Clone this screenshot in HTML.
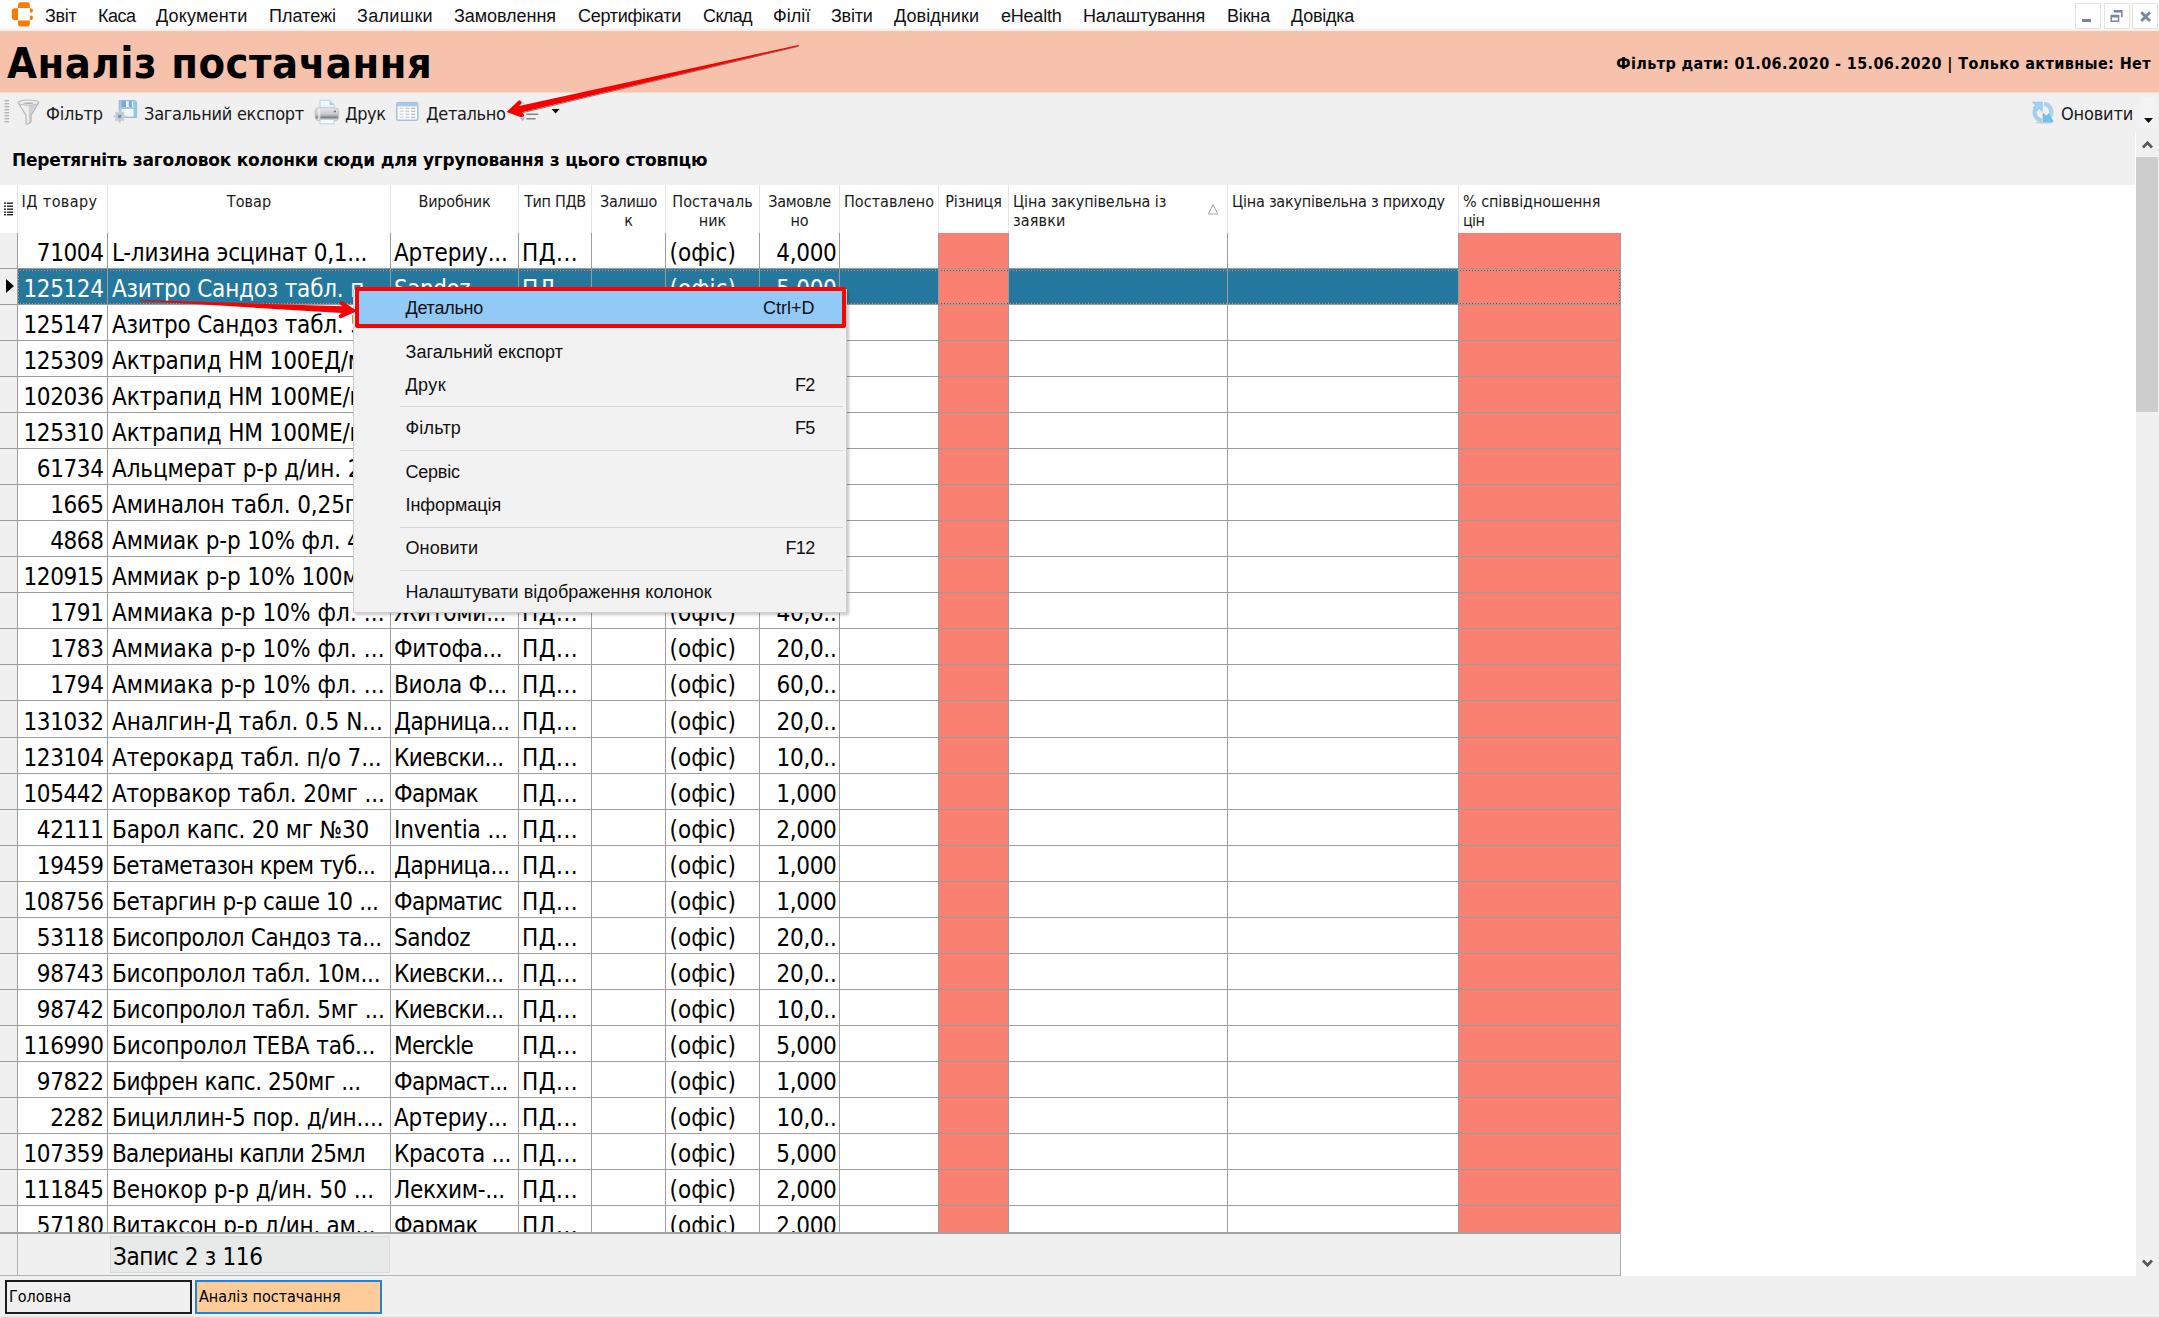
<!DOCTYPE html><html lang="uk"><head><meta charset="utf-8"><title>Аналіз постачання</title><style>
html,body{margin:0;padding:0}
body{width:2159px;height:1318px;overflow:hidden;position:relative;background:#f0f0f0;font-family:"DejaVu Sans Condensed","Liberation Sans",sans-serif;color:#000}
div,span{position:absolute;box-sizing:border-box;white-space:nowrap}
svg{position:absolute;overflow:visible}
#menubar{left:0;top:0;width:2159px;height:31px;background:linear-gradient(#fff 0,#fff 27px,#f0f0f0 30px)}
#menubar span{font-family:"Liberation Sans",sans-serif;font-size:18px;top:5px;line-height:22px;color:#111}
#title{left:0;top:31px;width:2159px;height:61px;background:#f6c2ab}
#title .t{left:7px;top:5px;font-size:43px;font-weight:bold;line-height:54px;letter-spacing:.55px}
#title .f{right:8px;top:22.5px;font-size:16px;font-weight:bold;line-height:20px;letter-spacing:.4px}
#toolbar{left:0;top:92px;width:2159px;height:40px;background:linear-gradient(#f3dad0 0,#f3dad0 1px,#f0f1f2 1px,#f0f0f0 2px)}
#toolbar span{font-size:18px;line-height:22px;top:10.5px;color:#1a1a1a}
#group{left:0;top:132px;width:2135px;height:53px;background:#f0f0f0}
#group span{left:12px;top:18px;font-family:"DejaVu Sans","Liberation Sans",sans-serif;font-size:17px;font-weight:bold;line-height:21px;letter-spacing:-.2px}
#hdr{left:0;top:185px;width:2135px;height:48px;background:#fff}
#hdr .h{font-size:16px;line-height:19.5px;top:6.5px;white-space:nowrap;text-align:center;color:#1a1a1a}
#hdr .vl{top:0;width:1px;height:48px;background:#e4e4e4}
#grid{left:0;top:233px;width:2135px;height:999px;background:#fff;overflow:hidden}
#grid .ind{left:0;top:0;width:17px;height:999px;background:#f0f0f0}
#grid .vl{top:0;width:1px;height:999px;background:#9c9c9c}
#grid .hl{left:0;width:1621px;height:1px;background:#9c9c9c}
#grid .sal{top:0;height:999px;background:#fa8072}
#grid .c{font-size:24px;line-height:41px;height:35px;overflow:hidden}
#grid .sel{left:18px;top:36px;width:1603px;height:35px;background:#25789d}
#foot{left:0;top:1232px;width:1621px;height:44px;background:#f0f0f0;border-top:2px solid #a0a0a0;border-right:1px solid #a9a9a9;border-bottom:1px solid #b4b4b4}
#foot .v{left:17px;top:0;width:1px;height:42px;background:#b0b0b0}
#foot .cell{left:110px;top:2px;width:280px;height:37px;background:#e8eaea;border:1px solid #dadcdc;font-size:24px;line-height:41px;padding-left:2px;letter-spacing:-.35px;overflow:hidden}
#right{left:1621px;top:185px;width:514px;height:1091px;background:#fff}
#sb{left:2135px;top:132px;width:24px;height:1144px;background:#f0f0f0;border-left:1px solid #fff}
#sb .th{left:0;top:25px;width:22px;height:255px;background:#cdcdcd}
#tabs{left:0;top:1276px;width:2159px;height:42px;background:#f0f0f0}
#tabs div{top:4px;height:34px;font-size:16px;line-height:30px;padding-left:2px}
#ctx{left:353px;top:289px;width:494px;height:324px;background:#f2f2f2;border:1px solid #cdcdcd;box-shadow:2px 2px 3px rgba(0,0,0,.22);font-family:"Liberation Sans",sans-serif;font-size:18px}
#ctx span{line-height:22px;color:#111}
#ctx .sep{left:46px;width:443px;height:1px;background:#d7d7d7}
#ctx .hi{left:2px;top:1px;width:489px;height:35px;background:#91c9f7}
#red{left:355px;top:287px;width:491px;height:41px;border:4px solid #f00;border-radius:2px}
</style></head><body>
<div id="menubar">
<svg style="left:11px;top:2px" width="23" height="26" viewBox="11 2 23 26"><g fill="#ff7800"><path d="M18 7.900V4.600a2.300 2.300 0 0 1 2.300-2.300h7.200a2.300 2.300 0 0 1 2.300 2.300v3.300z"/><path d="M18 20.600v3.600a2.300 2.300 0 0 0 2.300 2.300h7.200a2.300 2.300 0 0 0 2.300-2.300v-3.600z"/><path d="M18 8.300h-3.200a3 3 0 0 0-3 3v5.700a3 3 0 0 0 3 3h3.200z"/><path d="M29.800 8.300h.9a2.300 2.300 0 0 1 2.300 2.300v0a2.200 2.200 0 0 1-2.200 2.200h-1z"/><path d="M29.800 20h.9a2.300 2.300 0 0 0 2.300-2.300v0a2.200 2.200 0 0 0-2.200-2.200h-1z"/></g></svg>
<span style="left:45px;letter-spacing:-0.3px">Звіт</span>
<span style="left:98px;letter-spacing:-0.5px">Каса</span>
<span style="left:156px;letter-spacing:0.18px">Документи</span>
<span style="left:269px;letter-spacing:0.01px">Платежі</span>
<span style="left:357px;letter-spacing:0.31px">Залишки</span>
<span style="left:454px;letter-spacing:-0.06px">Замовлення</span>
<span style="left:578px;letter-spacing:-0.27px">Сертифікати</span>
<span style="left:703px;letter-spacing:-0.62px">Склад</span>
<span style="left:773px;letter-spacing:0.06px">Філії</span>
<span style="left:831px;letter-spacing:-0.25px">Звіти</span>
<span style="left:894px;letter-spacing:0.07px">Довідники</span>
<span style="left:1001px;letter-spacing:-0.22px">eHealth</span>
<span style="left:1083px;letter-spacing:-0.2px">Налаштування</span>
<span style="left:1227px;letter-spacing:-0.17px">Вікна</span>
<span style="left:1291px;letter-spacing:-0.25px">Довідка</span>
<div style="left:2075px;top:3px;width:26px;height:26px;border:1px solid #e3e3e3;background:#fff"></div>
<div style="left:2104px;top:3px;width:26px;height:26px;border:1px solid #e3e3e3;background:#fff"></div>
<div style="left:2132px;top:3px;width:26px;height:26px;border:1px solid #e3e3e3;background:#fff"></div>
<svg style="left:2069px;top:0" width="90" height="31" viewBox="2069 0 90 31"><g fill="#76879a"><rect x="2082" y="19" width="9" height="3"/><path d="M2113.8 10h8.8v7.3h-1.6v-4.8h-7.2z"/><path d="M2110.5 14.8h8.8v7.1h-8.8zM2112 17.5v3h5.8v-3z" fill-rule="evenodd"/></g><path d="M2141.2 12.2l8.8 8.8M2150 12.2l-8.8 8.8" stroke="#76879a" stroke-width="2.8" fill="none"/></svg>
</div>
<div id="title"><span class="t">Аналіз постачання</span><span class="f">Фільтр дати: 01.06.2020 - 15.06.2020 | Только активные: Нет</span></div>
<div id="toolbar">
<svg style="left:0;top:0" width="600" height="40" viewBox="0 92 600 40">
<defs><linearGradient id="fg" x1="0" x2="1"><stop offset="0" stop-color="#f6f6f6"/><stop offset=".5" stop-color="#ececec"/><stop offset=".55" stop-color="#cfcfcf"/><stop offset="1" stop-color="#dedede"/></linearGradient><linearGradient id="pg" x1="0" y1="0" x2="0" y2="1"><stop offset="0" stop-color="#e9e9e9"/><stop offset=".5" stop-color="#c9c9c9"/><stop offset=".78" stop-color="#7e7e7e"/><stop offset=".9" stop-color="#d8d8d8"/><stop offset="1" stop-color="#c4c4c4"/></linearGradient><linearGradient id="pp" x1="0" y1="0" x2="0" y2="1"><stop offset="0" stop-color="#fff"/><stop offset="1" stop-color="#dcecfd"/></linearGradient></defs>
<g fill="#b3b3b3"><rect x="4.5" y="100" width="4.5" height="1.4"/><rect x="4.5" y="103" width="4.5" height="1.4"/><rect x="4.5" y="106" width="4.5" height="1.4"/><rect x="4.5" y="109" width="4.5" height="1.4"/><rect x="4.5" y="112" width="4.5" height="1.4"/><rect x="4.5" y="115" width="4.5" height="1.4"/><rect x="4.5" y="118" width="4.5" height="1.4"/><rect x="4.5" y="121" width="4.5" height="1.4"/></g>
<path d="M18.3 103L26 115.2v8.1c0 .9 1 1.2 1.8.8l2.6-1.5c.5-.3.7-.7.7-1.3v-6.100L38.6 103z" fill="url(#fg)" stroke="#b4b4b4" stroke-width="1.1"/><ellipse cx="28.4" cy="102.6" rx="10.3" ry="2.6" fill="#ececec" stroke="#bdbdbd" stroke-width="1.1"/><ellipse cx="28.4" cy="103.3" rx="5.2" ry=".8" fill="#b0b0b0"/>
<path d="M119.2 100.5h15.6l1.8 1.6v15.4h-17.4z" fill="#a9c6e6" stroke="#94b6de" stroke-width="1"/><path d="M134.8 100.5l1.8 1.6v15.4h-2.4z" fill="#8ccbe6"/><rect x="121.6" y="101.2" width="11.6" height="5.8" fill="#74a9d9"/><rect x="126" y="101.2" width="2.8" height="5.8" fill="#f2f6fa"/><rect x="131.8" y="101.2" width="1.4" height="5.8" fill="#e6eef7"/><rect x="121.6" y="109" width="11.8" height="7.6" fill="#f4f4f4"/>
<circle cx="119.7" cy="116.4" r="4.6" fill="#c6ccd1"/><path d="M119.7 110.4v12M113.7 116.4h12M115.5 112.2l8.4 8.4M123.9 112.2l-8.4 8.4" stroke="#c6ccd1" stroke-width="2.2"/><circle cx="119.7" cy="116.4" r="1.8" fill="#5f9bcd"/>
<path d="M320 100.3h9.8l4.4 4.6v4.5H320z" fill="url(#pp)" stroke="#b2d0f3" stroke-width="1"/><path d="M329.6 100.5v4.6h4.4z" fill="#a9c9ef"/><rect x="315.2" y="107.8" width="23.4" height="12.8" rx="3.4" fill="url(#pg)" stroke="#c2c2c2" stroke-width="1"/><rect x="317.8" y="108.6" width="2.6" height="10.6" fill="#f1f1f1" opacity=".7"/><rect x="333.8" y="110.6" width="2.2" height="1.6" fill="#7a7a7a"/><rect x="320" y="119.6" width="14.2" height="4.2" fill="#fbfdff" stroke="#b2d0f3" stroke-width="1"/>
<rect x="396.8" y="102.7" width="21" height="17.6" rx="1.2" fill="#fdfdfe" stroke="#a3bfe6" stroke-width="1.5"/><rect x="397" y="103" width="20.6" height="3.4" fill="#adc8eb"/>
<g><rect x="399.6" y="107.6" width="4" height="1.5" fill="#d6d6d6"/><rect x="405.4" y="107.6" width="4" height="1.5" fill="#cdcdcd"/><rect x="411.2" y="107.6" width="4" height="1.5" fill="#bdbdbd"/><rect x="399.6" y="110.6" width="4" height="1.5" fill="#d6d6d6"/><rect x="405.4" y="110.6" width="4" height="1.5" fill="#cdcdcd"/><rect x="411.2" y="110.6" width="4" height="1.5" fill="#bdbdbd"/><rect x="399.6" y="113.6" width="4" height="1.5" fill="#d6d6d6"/><rect x="405.4" y="113.6" width="4" height="1.5" fill="#cdcdcd"/><rect x="411.2" y="113.6" width="4" height="1.5" fill="#bdbdbd"/><rect x="399.6" y="116.6" width="4" height="1.5" fill="#d6d6d6"/><rect x="405.4" y="116.6" width="4" height="1.5" fill="#cdcdcd"/><rect x="411.2" y="116.6" width="4" height="1.5" fill="#bdbdbd"/></g>
<path d="M522.6 100.5l2.6 3.6h-5.2z" fill="#c3d9f6"/><path d="M522.6 121.2l2.6-3.6h-5.2z" fill="#8eb4ef"/><path d="M526.4 114.3h11.8M526.4 118.7h9.2" stroke="#858585" stroke-width="1.5"/><path d="M551.6 109h8l-4 4.5z" fill="#111"/>
</svg>
<span style="left:46px;letter-spacing:-0.18px">Фільтр</span>
<span style="left:144px;letter-spacing:-0.25px">Загальний експорт</span>
<span style="left:345px;letter-spacing:-0.45px">Друк</span>
<span style="left:426px;letter-spacing:-0.36px">Детально</span>
<svg style="left:2030px;top:8px" width="26" height="26" viewBox="2030 100 26 26"><ellipse cx="2044" cy="122.6" rx="8.5" ry="1.2" fill="#000" opacity=".12"/><g fill="none" stroke-width="4.2"><path d="M2036.2 107.5a8.2 8.2 0 0 0 5.8 13" stroke="#a4cff3"/><path d="M2050 116.5a8.2 8.2 0 0 0-6-12.6" stroke="#a9d2f4"/></g><path d="M2032.6 102.2h9.6v9.2l-3-3-2.6 2.6-3.4-3.2 2.6-2.6z" fill="#9fd2f8" stroke="#86bdf0" stroke-width=".8"/><path d="M2043.2 113.4l3.2 2.6 2.4-2.2 4.4 8h-10z" fill="#68c4f6" stroke="#6aaee8" stroke-width=".8"/></svg>
<span style="left:2061px;letter-spacing:-0.18px">Оновити</span>
<div style="left:2140px;top:5px;width:16px;height:31px;background:#f3f3f3"></div>
<svg style="left:2144px;top:26px" width="9" height="5" viewBox="0 0 9 5"><path d="M0 0h9l-4.5 5z" fill="#111"/></svg>
</div>
<div id="group"><span>Перетягніть заголовок колонки сюди для угруповання з цього стовпцю</span></div>
<div id="hdr">
<div class="vl" style="left:17px"></div>
<div class="vl" style="left:107px"></div>
<div class="vl" style="left:390px"></div>
<div class="vl" style="left:518px"></div>
<div class="vl" style="left:591px"></div>
<div class="vl" style="left:665px"></div>
<div class="vl" style="left:759px"></div>
<div class="vl" style="left:839px"></div>
<div class="vl" style="left:938px"></div>
<div class="vl" style="left:1008px"></div>
<div class="vl" style="left:1227px"></div>
<div class="vl" style="left:1458px"></div>
<svg style="left:4px;top:17px" width="9" height="13" viewBox="0 0 9 13"><g fill="#222"><rect x="0" y="0.5" width="2" height="1.4"/><rect x="3" y="0.5" width="6" height="1.4"/><rect x="0" y="3.5" width="2" height="1.4"/><rect x="3" y="3.5" width="6" height="1.4"/><rect x="0" y="6.5" width="2" height="1.4"/><rect x="3" y="6.5" width="6" height="1.4"/><rect x="0" y="9.5" width="2" height="1.4"/><rect x="3" y="9.5" width="6" height="1.4"/><rect x="0" y="12" width="2" height="1.4"/><rect x="3" y="12" width="6" height="1.4"/></g></svg>
<div class="h" style="left:15px;width:89px"><span style="position:static;letter-spacing:0.42px">ІД товару</span></div>
<div class="h" style="left:108px;width:282px"><span style="position:static;letter-spacing:0.09px">Товар</span></div>
<div class="h" style="left:391px;width:127px"><span style="position:static;letter-spacing:-0.19px">Виробник</span></div>
<div class="h" style="left:519px;width:72px"><span style="position:static;letter-spacing:-0.34px">Тип ПДВ</span></div>
<div class="h" style="left:592px;width:73px"><span style="position:static;letter-spacing:-0.26px">Залишо</span><br>к</div>
<div class="h" style="left:666px;width:93px"><span style="position:static;letter-spacing:0.08px">Постачаль</span><br>ник</div>
<div class="h" style="left:760px;width:79px"><span style="position:static;letter-spacing:-0.25px">Замовле</span><br>но</div>
<div class="h" style="left:840px;width:98px"><span style="position:static;letter-spacing:0.05px">Поставлено</span></div>
<div class="h" style="left:939px;width:69px"><span style="position:static;letter-spacing:-0.17px">Різниця</span></div>
<div class="h" style="left:1013px;width:185px;text-align:left"><span style="position:static;letter-spacing:-0.06px">Ціна закупівельна із</span><br><span style="position:static;letter-spacing:0.14px">заявки</span></div>
<div class="h" style="left:1232px;width:222px;text-align:left"><span style="position:static;letter-spacing:-0.22px">Ціна закупівельна з приходу</span></div>
<div class="h" style="left:1463px;width:153px;text-align:left"><span style="position:static;letter-spacing:-0.06px">% співвідношення</span><br><span style="position:static;letter-spacing:-0.7px">цін</span></div>
<svg style="left:1207px;top:17.5px" width="12" height="12" viewBox="0 0 12 12"><path d="M6 1.5l4.8 9.5H1.2z" fill="#fff" stroke="#a6a6a6" stroke-width="1"/></svg>
</div>
<div id="grid"><div class="ind"></div>
<div class="sel"></div>
<div class="sal" style="left:939px;width:69px"></div><div class="sal" style="left:1459px;width:161px"></div>
<div class="vl" style="left:17px"></div>
<div class="vl" style="left:107px"></div>
<div class="vl" style="left:390px"></div>
<div class="vl" style="left:518px"></div>
<div class="vl" style="left:591px"></div>
<div class="vl" style="left:665px"></div>
<div class="vl" style="left:759px"></div>
<div class="vl" style="left:839px"></div>
<div class="vl" style="left:938px"></div>
<div class="vl" style="left:1008px"></div>
<div class="vl" style="left:1227px"></div>
<div class="vl" style="left:1458px"></div>
<div class="vl" style="left:1620px"></div>
<div class="hl" style="top:35.0px"></div>
<div class="hl" style="top:71.04px"></div>
<div class="hl" style="top:107.08px"></div>
<div class="hl" style="top:143.12px"></div>
<div class="hl" style="top:179.16px"></div>
<div class="hl" style="top:215.2px"></div>
<div class="hl" style="top:251.24px"></div>
<div class="hl" style="top:287.28px"></div>
<div class="hl" style="top:323.32px"></div>
<div class="hl" style="top:359.36px"></div>
<div class="hl" style="top:395.4px"></div>
<div class="hl" style="top:431.44px"></div>
<div class="hl" style="top:467.48px"></div>
<div class="hl" style="top:503.52px"></div>
<div class="hl" style="top:539.56px"></div>
<div class="hl" style="top:575.6px"></div>
<div class="hl" style="top:611.64px"></div>
<div class="hl" style="top:647.68px"></div>
<div class="hl" style="top:683.72px"></div>
<div class="hl" style="top:719.76px"></div>
<div class="hl" style="top:755.8px"></div>
<div class="hl" style="top:791.84px"></div>
<div class="hl" style="top:827.88px"></div>
<div class="hl" style="top:863.92px"></div>
<div class="hl" style="top:899.96px"></div>
<div class="hl" style="top:936.0px"></div>
<div class="hl" style="top:972.04px"></div>
<div class="hl" style="top:1008.08px"></div>
<div class="c" style="left:18px;top:0.0px;width:89px;text-align:right;padding-right:3.5px;letter-spacing:-.4px">71004</div>
<div class="c" style="left:108px;top:0.0px;width:282px;padding-left:4px;letter-spacing:-0.26px">L-лизина эсцинат 0,1...</div>
<div class="c" style="left:391px;top:0.0px;width:127px;padding-left:3px;letter-spacing:-0.17px">Артериу...</div>
<div class="c" style="left:519px;top:0.0px;width:72px;padding-left:3px;letter-spacing:.5px">ПД...</div>
<div class="c" style="left:666px;top:0.0px;width:93px;padding-left:3.5px">(офіс)</div>
<div class="c" style="left:760px;top:0.0px;width:79px;text-align:right;padding-right:2.5px;letter-spacing:-.3px">4,000</div>
<div class="c" style="left:18px;top:36.04px;width:89px;text-align:right;padding-right:3.5px;letter-spacing:-.4px;color:#fff">125124</div>
<div class="c" style="left:108px;top:36.04px;width:282px;padding-left:4px;letter-spacing:-0.2px;color:#fff">Азитро Сандоз табл. п...</div>
<div class="c" style="left:391px;top:36.04px;width:127px;padding-left:3px;letter-spacing:-0.45px;color:#fff">Sandoz</div>
<div class="c" style="left:519px;top:36.04px;width:72px;padding-left:3px;letter-spacing:.5px;color:#fff">ПД...</div>
<div class="c" style="left:666px;top:36.04px;width:93px;padding-left:3.5px;color:#fff">(офіс)</div>
<div class="c" style="left:760px;top:36.04px;width:79px;text-align:right;padding-right:2.5px;letter-spacing:-.3px;color:#fff">5,000</div>
<div class="c" style="left:18px;top:72.08px;width:89px;text-align:right;padding-right:3.5px;letter-spacing:-.4px">125147</div>
<div class="c" style="left:108px;top:72.08px;width:282px;padding-left:4px;letter-spacing:-0.2px">Азитро Сандоз табл. 5...</div>
<div class="c" style="left:391px;top:72.08px;width:127px;padding-left:3px;letter-spacing:-0.2px"></div>
<div class="c" style="left:519px;top:72.08px;width:72px;padding-left:3px;letter-spacing:.5px"></div>
<div class="c" style="left:666px;top:72.08px;width:93px;padding-left:3.5px"></div>
<div class="c" style="left:760px;top:72.08px;width:79px;text-align:right;padding-right:2.5px;letter-spacing:-.3px"></div>
<div class="c" style="left:18px;top:108.12px;width:89px;text-align:right;padding-right:3.5px;letter-spacing:-.4px">125309</div>
<div class="c" style="left:108px;top:108.12px;width:282px;padding-left:4px;letter-spacing:-0.12px">Актрапид НМ 100ЕД/м...</div>
<div class="c" style="left:391px;top:108.12px;width:127px;padding-left:3px;letter-spacing:-0.2px"></div>
<div class="c" style="left:519px;top:108.12px;width:72px;padding-left:3px;letter-spacing:.5px"></div>
<div class="c" style="left:666px;top:108.12px;width:93px;padding-left:3.5px"></div>
<div class="c" style="left:760px;top:108.12px;width:79px;text-align:right;padding-right:2.5px;letter-spacing:-.3px"></div>
<div class="c" style="left:18px;top:144.16px;width:89px;text-align:right;padding-right:3.5px;letter-spacing:-.4px">102036</div>
<div class="c" style="left:108px;top:144.16px;width:282px;padding-left:4px;letter-spacing:-0.12px">Актрапид НМ 100МЕ/м...</div>
<div class="c" style="left:391px;top:144.16px;width:127px;padding-left:3px;letter-spacing:-0.2px"></div>
<div class="c" style="left:519px;top:144.16px;width:72px;padding-left:3px;letter-spacing:.5px"></div>
<div class="c" style="left:666px;top:144.16px;width:93px;padding-left:3.5px"></div>
<div class="c" style="left:760px;top:144.16px;width:79px;text-align:right;padding-right:2.5px;letter-spacing:-.3px"></div>
<div class="c" style="left:18px;top:180.2px;width:89px;text-align:right;padding-right:3.5px;letter-spacing:-.4px">125310</div>
<div class="c" style="left:108px;top:180.2px;width:282px;padding-left:4px;letter-spacing:-0.12px">Актрапид НМ 100МЕ/м...</div>
<div class="c" style="left:391px;top:180.2px;width:127px;padding-left:3px;letter-spacing:-0.2px"></div>
<div class="c" style="left:519px;top:180.2px;width:72px;padding-left:3px;letter-spacing:.5px"></div>
<div class="c" style="left:666px;top:180.2px;width:93px;padding-left:3.5px"></div>
<div class="c" style="left:760px;top:180.2px;width:79px;text-align:right;padding-right:2.5px;letter-spacing:-.3px"></div>
<div class="c" style="left:18px;top:216.24px;width:89px;text-align:right;padding-right:3.5px;letter-spacing:-.4px">61734</div>
<div class="c" style="left:108px;top:216.24px;width:282px;padding-left:4px;letter-spacing:-0.12px">Альцмерат р-р д/ин. 2...</div>
<div class="c" style="left:391px;top:216.24px;width:127px;padding-left:3px;letter-spacing:-0.2px"></div>
<div class="c" style="left:519px;top:216.24px;width:72px;padding-left:3px;letter-spacing:.5px"></div>
<div class="c" style="left:666px;top:216.24px;width:93px;padding-left:3.5px"></div>
<div class="c" style="left:760px;top:216.24px;width:79px;text-align:right;padding-right:2.5px;letter-spacing:-.3px"></div>
<div class="c" style="left:18px;top:252.28px;width:89px;text-align:right;padding-right:3.5px;letter-spacing:-.4px">1665</div>
<div class="c" style="left:108px;top:252.28px;width:282px;padding-left:4px;letter-spacing:-0.12px">Аминалон табл. 0,25г...</div>
<div class="c" style="left:391px;top:252.28px;width:127px;padding-left:3px;letter-spacing:-0.2px"></div>
<div class="c" style="left:519px;top:252.28px;width:72px;padding-left:3px;letter-spacing:.5px"></div>
<div class="c" style="left:666px;top:252.28px;width:93px;padding-left:3.5px"></div>
<div class="c" style="left:760px;top:252.28px;width:79px;text-align:right;padding-right:2.5px;letter-spacing:-.3px"></div>
<div class="c" style="left:18px;top:288.32px;width:89px;text-align:right;padding-right:3.5px;letter-spacing:-.4px">4868</div>
<div class="c" style="left:108px;top:288.32px;width:282px;padding-left:4px;letter-spacing:-0.12px">Аммиак р-р 10% фл. 4...</div>
<div class="c" style="left:391px;top:288.32px;width:127px;padding-left:3px;letter-spacing:-0.2px"></div>
<div class="c" style="left:519px;top:288.32px;width:72px;padding-left:3px;letter-spacing:.5px"></div>
<div class="c" style="left:666px;top:288.32px;width:93px;padding-left:3.5px"></div>
<div class="c" style="left:760px;top:288.32px;width:79px;text-align:right;padding-right:2.5px;letter-spacing:-.3px"></div>
<div class="c" style="left:18px;top:324.36px;width:89px;text-align:right;padding-right:3.5px;letter-spacing:-.4px">120915</div>
<div class="c" style="left:108px;top:324.36px;width:282px;padding-left:4px;letter-spacing:-0.12px">Аммиак р-р 10% 100м...</div>
<div class="c" style="left:391px;top:324.36px;width:127px;padding-left:3px;letter-spacing:-0.2px"></div>
<div class="c" style="left:519px;top:324.36px;width:72px;padding-left:3px;letter-spacing:.5px"></div>
<div class="c" style="left:666px;top:324.36px;width:93px;padding-left:3.5px"></div>
<div class="c" style="left:760px;top:324.36px;width:79px;text-align:right;padding-right:2.5px;letter-spacing:-.3px"></div>
<div class="c" style="left:18px;top:360.4px;width:89px;text-align:right;padding-right:3.5px;letter-spacing:-.4px">1791</div>
<div class="c" style="left:108px;top:360.4px;width:282px;padding-left:4px;letter-spacing:0.06px">Аммиака р-р 10% фл. ...</div>
<div class="c" style="left:391px;top:360.4px;width:127px;padding-left:3px;letter-spacing:-0.2px">Житоми...</div>
<div class="c" style="left:519px;top:360.4px;width:72px;padding-left:3px;letter-spacing:.5px">ПД...</div>
<div class="c" style="left:666px;top:360.4px;width:93px;padding-left:3.5px">(офіс)</div>
<div class="c" style="left:760px;top:360.4px;width:79px;text-align:right;padding-right:2.5px;letter-spacing:-.3px">40,0..</div>
<div class="c" style="left:18px;top:396.44px;width:89px;text-align:right;padding-right:3.5px;letter-spacing:-.4px">1783</div>
<div class="c" style="left:108px;top:396.44px;width:282px;padding-left:4px;letter-spacing:0.06px">Аммиака р-р 10% фл. ...</div>
<div class="c" style="left:391px;top:396.44px;width:127px;padding-left:3px;letter-spacing:-0.25px">Фитофа...</div>
<div class="c" style="left:519px;top:396.44px;width:72px;padding-left:3px;letter-spacing:.5px">ПД...</div>
<div class="c" style="left:666px;top:396.44px;width:93px;padding-left:3.5px">(офіс)</div>
<div class="c" style="left:760px;top:396.44px;width:79px;text-align:right;padding-right:2.5px;letter-spacing:-.3px">20,0..</div>
<div class="c" style="left:18px;top:432.48px;width:89px;text-align:right;padding-right:3.5px;letter-spacing:-.4px">1794</div>
<div class="c" style="left:108px;top:432.48px;width:282px;padding-left:4px;letter-spacing:0.06px">Аммиака р-р 10% фл. ...</div>
<div class="c" style="left:391px;top:432.48px;width:127px;padding-left:3px;letter-spacing:-0.22px">Виола Ф...</div>
<div class="c" style="left:519px;top:432.48px;width:72px;padding-left:3px;letter-spacing:.5px">ПД...</div>
<div class="c" style="left:666px;top:432.48px;width:93px;padding-left:3.5px">(офіс)</div>
<div class="c" style="left:760px;top:432.48px;width:79px;text-align:right;padding-right:2.5px;letter-spacing:-.3px">60,0..</div>
<div class="c" style="left:18px;top:468.52px;width:89px;text-align:right;padding-right:3.5px;letter-spacing:-.4px">131032</div>
<div class="c" style="left:108px;top:468.52px;width:282px;padding-left:4px;letter-spacing:-0.03px">Аналгин-Д табл. 0.5 N...</div>
<div class="c" style="left:391px;top:468.52px;width:127px;padding-left:3px;letter-spacing:-0.47px">Дарница...</div>
<div class="c" style="left:519px;top:468.52px;width:72px;padding-left:3px;letter-spacing:.5px">ПД...</div>
<div class="c" style="left:666px;top:468.52px;width:93px;padding-left:3.5px">(офіс)</div>
<div class="c" style="left:760px;top:468.52px;width:79px;text-align:right;padding-right:2.5px;letter-spacing:-.3px">20,0..</div>
<div class="c" style="left:18px;top:504.56px;width:89px;text-align:right;padding-right:3.5px;letter-spacing:-.4px">123104</div>
<div class="c" style="left:108px;top:504.56px;width:282px;padding-left:4px;letter-spacing:-0.09px">Атерокард табл. п/о 7...</div>
<div class="c" style="left:391px;top:504.56px;width:127px;padding-left:3px;letter-spacing:-0.53px">Киевски...</div>
<div class="c" style="left:519px;top:504.56px;width:72px;padding-left:3px;letter-spacing:.5px">ПД...</div>
<div class="c" style="left:666px;top:504.56px;width:93px;padding-left:3.5px">(офіс)</div>
<div class="c" style="left:760px;top:504.56px;width:79px;text-align:right;padding-right:2.5px;letter-spacing:-.3px">10,0..</div>
<div class="c" style="left:18px;top:540.6px;width:89px;text-align:right;padding-right:3.5px;letter-spacing:-.4px">105442</div>
<div class="c" style="left:108px;top:540.6px;width:282px;padding-left:4px;letter-spacing:-0.15px">Аторвакор табл. 20мг ...</div>
<div class="c" style="left:391px;top:540.6px;width:127px;padding-left:3px;letter-spacing:-0.7px">Фармак</div>
<div class="c" style="left:519px;top:540.6px;width:72px;padding-left:3px;letter-spacing:.5px">ПД...</div>
<div class="c" style="left:666px;top:540.6px;width:93px;padding-left:3.5px">(офіс)</div>
<div class="c" style="left:760px;top:540.6px;width:79px;text-align:right;padding-right:2.5px;letter-spacing:-.3px">1,000</div>
<div class="c" style="left:18px;top:576.64px;width:89px;text-align:right;padding-right:3.5px;letter-spacing:-.4px">42111</div>
<div class="c" style="left:108px;top:576.64px;width:282px;padding-left:4px;letter-spacing:-0.15px">Барол капс. 20 мг №30</div>
<div class="c" style="left:391px;top:576.64px;width:127px;padding-left:3px;letter-spacing:-0.1px">Inventia ...</div>
<div class="c" style="left:519px;top:576.64px;width:72px;padding-left:3px;letter-spacing:.5px">ПД...</div>
<div class="c" style="left:666px;top:576.64px;width:93px;padding-left:3.5px">(офіс)</div>
<div class="c" style="left:760px;top:576.64px;width:79px;text-align:right;padding-right:2.5px;letter-spacing:-.3px">2,000</div>
<div class="c" style="left:18px;top:612.68px;width:89px;text-align:right;padding-right:3.5px;letter-spacing:-.4px">19459</div>
<div class="c" style="left:108px;top:612.68px;width:282px;padding-left:4px;letter-spacing:-0.61px">Бетаметазон крем туб...</div>
<div class="c" style="left:391px;top:612.68px;width:127px;padding-left:3px;letter-spacing:-0.47px">Дарница...</div>
<div class="c" style="left:519px;top:612.68px;width:72px;padding-left:3px;letter-spacing:.5px">ПД...</div>
<div class="c" style="left:666px;top:612.68px;width:93px;padding-left:3.5px">(офіс)</div>
<div class="c" style="left:760px;top:612.68px;width:79px;text-align:right;padding-right:2.5px;letter-spacing:-.3px">1,000</div>
<div class="c" style="left:18px;top:648.72px;width:89px;text-align:right;padding-right:3.5px;letter-spacing:-.4px">108756</div>
<div class="c" style="left:108px;top:648.72px;width:282px;padding-left:4px;letter-spacing:-0.39px">Бетаргин р-р саше 10 ...</div>
<div class="c" style="left:391px;top:648.72px;width:127px;padding-left:3px;letter-spacing:-0.7px">Фарматис</div>
<div class="c" style="left:519px;top:648.72px;width:72px;padding-left:3px;letter-spacing:.5px">ПД...</div>
<div class="c" style="left:666px;top:648.72px;width:93px;padding-left:3.5px">(офіс)</div>
<div class="c" style="left:760px;top:648.72px;width:79px;text-align:right;padding-right:2.5px;letter-spacing:-.3px">1,000</div>
<div class="c" style="left:18px;top:684.76px;width:89px;text-align:right;padding-right:3.5px;letter-spacing:-.4px">53118</div>
<div class="c" style="left:108px;top:684.76px;width:282px;padding-left:4px;letter-spacing:-0.36px">Бисопролол Сандоз та...</div>
<div class="c" style="left:391px;top:684.76px;width:127px;padding-left:3px;letter-spacing:-0.45px">Sandoz</div>
<div class="c" style="left:519px;top:684.76px;width:72px;padding-left:3px;letter-spacing:.5px">ПД...</div>
<div class="c" style="left:666px;top:684.76px;width:93px;padding-left:3.5px">(офіс)</div>
<div class="c" style="left:760px;top:684.76px;width:79px;text-align:right;padding-right:2.5px;letter-spacing:-.3px">20,0..</div>
<div class="c" style="left:18px;top:720.8px;width:89px;text-align:right;padding-right:3.5px;letter-spacing:-.4px">98743</div>
<div class="c" style="left:108px;top:720.8px;width:282px;padding-left:4px;letter-spacing:-0.23px">Бисопролол табл. 10м...</div>
<div class="c" style="left:391px;top:720.8px;width:127px;padding-left:3px;letter-spacing:-0.53px">Киевски...</div>
<div class="c" style="left:519px;top:720.8px;width:72px;padding-left:3px;letter-spacing:.5px">ПД...</div>
<div class="c" style="left:666px;top:720.8px;width:93px;padding-left:3.5px">(офіс)</div>
<div class="c" style="left:760px;top:720.8px;width:79px;text-align:right;padding-right:2.5px;letter-spacing:-.3px">20,0..</div>
<div class="c" style="left:18px;top:756.84px;width:89px;text-align:right;padding-right:3.5px;letter-spacing:-.4px">98742</div>
<div class="c" style="left:108px;top:756.84px;width:282px;padding-left:4px;letter-spacing:-0.23px">Бисопролол табл. 5мг ...</div>
<div class="c" style="left:391px;top:756.84px;width:127px;padding-left:3px;letter-spacing:-0.53px">Киевски...</div>
<div class="c" style="left:519px;top:756.84px;width:72px;padding-left:3px;letter-spacing:.5px">ПД...</div>
<div class="c" style="left:666px;top:756.84px;width:93px;padding-left:3.5px">(офіс)</div>
<div class="c" style="left:760px;top:756.84px;width:79px;text-align:right;padding-right:2.5px;letter-spacing:-.3px">10,0..</div>
<div class="c" style="left:18px;top:792.88px;width:89px;text-align:right;padding-right:3.5px;letter-spacing:-.4px">116990</div>
<div class="c" style="left:108px;top:792.88px;width:282px;padding-left:4px;letter-spacing:-0.1px">Бисопролол ТЕВА таб...</div>
<div class="c" style="left:391px;top:792.88px;width:127px;padding-left:3px;letter-spacing:-0.7px">Merckle</div>
<div class="c" style="left:519px;top:792.88px;width:72px;padding-left:3px;letter-spacing:.5px">ПД...</div>
<div class="c" style="left:666px;top:792.88px;width:93px;padding-left:3.5px">(офіс)</div>
<div class="c" style="left:760px;top:792.88px;width:79px;text-align:right;padding-right:2.5px;letter-spacing:-.3px">5,000</div>
<div class="c" style="left:18px;top:828.92px;width:89px;text-align:right;padding-right:3.5px;letter-spacing:-.4px">97822</div>
<div class="c" style="left:108px;top:828.92px;width:282px;padding-left:4px;letter-spacing:-0.4px">Бифрен капс. 250мг ...</div>
<div class="c" style="left:391px;top:828.92px;width:127px;padding-left:3px;letter-spacing:-0.64px">Фармаст...</div>
<div class="c" style="left:519px;top:828.92px;width:72px;padding-left:3px;letter-spacing:.5px">ПД...</div>
<div class="c" style="left:666px;top:828.92px;width:93px;padding-left:3.5px">(офіс)</div>
<div class="c" style="left:760px;top:828.92px;width:79px;text-align:right;padding-right:2.5px;letter-spacing:-.3px">1,000</div>
<div class="c" style="left:18px;top:864.96px;width:89px;text-align:right;padding-right:3.5px;letter-spacing:-.4px">2282</div>
<div class="c" style="left:108px;top:864.96px;width:282px;padding-left:4px;letter-spacing:-0.11px">Бициллин-5 пор. д/ин....</div>
<div class="c" style="left:391px;top:864.96px;width:127px;padding-left:3px;letter-spacing:-0.17px">Артериу...</div>
<div class="c" style="left:519px;top:864.96px;width:72px;padding-left:3px;letter-spacing:.5px">ПД...</div>
<div class="c" style="left:666px;top:864.96px;width:93px;padding-left:3.5px">(офіс)</div>
<div class="c" style="left:760px;top:864.96px;width:79px;text-align:right;padding-right:2.5px;letter-spacing:-.3px">10,0..</div>
<div class="c" style="left:18px;top:901.0px;width:89px;text-align:right;padding-right:3.5px;letter-spacing:-.4px">107359</div>
<div class="c" style="left:108px;top:901.0px;width:282px;padding-left:4px;letter-spacing:-0.69px">Валерианы капли 25мл</div>
<div class="c" style="left:391px;top:901.0px;width:127px;padding-left:3px;letter-spacing:-0.32px">Красота ...</div>
<div class="c" style="left:519px;top:901.0px;width:72px;padding-left:3px;letter-spacing:.5px">ПД...</div>
<div class="c" style="left:666px;top:901.0px;width:93px;padding-left:3.5px">(офіс)</div>
<div class="c" style="left:760px;top:901.0px;width:79px;text-align:right;padding-right:2.5px;letter-spacing:-.3px">5,000</div>
<div class="c" style="left:18px;top:937.04px;width:89px;text-align:right;padding-right:3.5px;letter-spacing:-.4px">111845</div>
<div class="c" style="left:108px;top:937.04px;width:282px;padding-left:4px;letter-spacing:-0.05px">Венокор р-р д/ин. 50 ...</div>
<div class="c" style="left:391px;top:937.04px;width:127px;padding-left:3px;letter-spacing:-0.32px">Лекхим-...</div>
<div class="c" style="left:519px;top:937.04px;width:72px;padding-left:3px;letter-spacing:.5px">ПД...</div>
<div class="c" style="left:666px;top:937.04px;width:93px;padding-left:3.5px">(офіс)</div>
<div class="c" style="left:760px;top:937.04px;width:79px;text-align:right;padding-right:2.5px;letter-spacing:-.3px">2,000</div>
<div class="c" style="left:18px;top:973.08px;width:89px;text-align:right;padding-right:3.5px;letter-spacing:-.4px">57180</div>
<div class="c" style="left:108px;top:973.08px;width:282px;padding-left:4px;letter-spacing:-0.28px">Витаксон р-р д/ин. ам...</div>
<div class="c" style="left:391px;top:973.08px;width:127px;padding-left:3px;letter-spacing:-0.7px">Фармак</div>
<div class="c" style="left:519px;top:973.08px;width:72px;padding-left:3px;letter-spacing:.5px">ПД...</div>
<div class="c" style="left:666px;top:973.08px;width:93px;padding-left:3.5px">(офіс)</div>
<div class="c" style="left:760px;top:973.08px;width:79px;text-align:right;padding-right:2.5px;letter-spacing:-.3px">2,000</div>
<div style="left:18px;top:37px;width:1602px;height:1px;background:repeating-linear-gradient(90deg,transparent 0 2px,#da8762 2px 3px)"></div>
<div style="left:939px;top:37px;width:69px;height:1px;background:#fa8072"></div><div style="left:939px;top:37px;width:69px;height:1px;background:repeating-linear-gradient(90deg,transparent 0 2px,#057f8d 2px 3px)"></div>
<div style="left:1459px;top:37px;width:161px;height:1px;background:#fa8072"></div><div style="left:1459px;top:37px;width:161px;height:1px;background:repeating-linear-gradient(90deg,transparent 0 1px,#057f8d 1px 2px,transparent 2px 3px)"></div>
<div style="left:18px;top:70px;width:1602px;height:1px;background:repeating-linear-gradient(90deg,transparent 0 2px,#da8762 2px 3px)"></div>
<div style="left:939px;top:70px;width:69px;height:1px;background:#fa8072"></div><div style="left:939px;top:70px;width:69px;height:1px;background:repeating-linear-gradient(90deg,transparent 0 2px,#057f8d 2px 3px)"></div>
<div style="left:1459px;top:70px;width:161px;height:1px;background:#fa8072"></div><div style="left:1459px;top:70px;width:161px;height:1px;background:repeating-linear-gradient(90deg,transparent 0 1px,#057f8d 1px 2px,transparent 2px 3px)"></div>
<div style="left:18px;top:37px;width:1px;height:34px;background:repeating-linear-gradient(180deg,#da8762 0 1px,transparent 1px 3px)"></div>
<div style="left:1619px;top:37px;width:1px;height:34px;background:repeating-linear-gradient(180deg,#057f8d 0 1px,transparent 1px 3px)"></div>
<svg style="left:6px;top:46px" width="8" height="14" viewBox="0 0 8 14"><path d="M0 0l8 7-8 7z" fill="#000"/></svg>
</div>
<div id="right"></div>
<div id="foot"><div class="v"></div><div class="cell">Запис 2 з 116</div></div>
<div id="sb"><div class="th"></div><svg style="left:6px;top:9px" width="11" height="7" viewBox="0 0 11 7"><path d="M1 6.500l4.500-4.700L10 6.500" fill="none" stroke="#585858" stroke-width="2.800"/></svg><svg style="left:6px;top:1128px" width="11" height="7" viewBox="0 0 11 7"><path d="M1 .500l4.500 4.700L10 .500" fill="none" stroke="#585858" stroke-width="2.800"/></svg></div>
<div id="tabs"><div style="left:5px;width:187px;border:2px solid #1c1c1c;background:#f0f0f0">Головна</div><div style="left:195px;width:187px;border:2px solid #1b84e0;background:#ffcc99">Аналіз постачання</div></div>
<div style="left:0;top:1316px;width:2159px;height:2px;background:linear-gradient(#e9e9e9,#d9d9d9)"></div>
<div id="ctx"><div class="hi"></div>
<span style="left:51.5px;top:7px;letter-spacing:-0.25px">Детально</span>
<span style="right:31.5px;top:7px;letter-spacing:-0.0px">Ctrl+D</span>
<span style="left:51.5px;top:51px;letter-spacing:0.05px">Загальний експорт</span>
<span style="left:51.5px;top:84px;letter-spacing:0.41px">Друк</span>
<span style="right:31.5px;top:84px;letter-spacing:-0.7px">F2</span>
<span style="left:51.5px;top:127px;letter-spacing:0.18px">Фільтр</span>
<span style="right:31.5px;top:127px;letter-spacing:-0.7px">F5</span>
<span style="left:51.5px;top:170.5px;letter-spacing:-0.23px">Сервіс</span>
<span style="left:51.5px;top:204px;letter-spacing:-0.06px">Інформація</span>
<span style="left:51.5px;top:247px;letter-spacing:0.1px">Оновити</span>
<span style="right:31.5px;top:247px;letter-spacing:-0.7px">F12</span>
<span style="left:51.5px;top:290.5px;letter-spacing:0.04px">Налаштувати відображення колонок</span>
<div class="sep" style="top:116px"></div>
<div class="sep" style="top:160px"></div>
<div class="sep" style="top:236.5px"></div>
<div class="sep" style="top:280px"></div>
</div><div id="red"></div>
<svg style="left:0;top:0" width="2159" height="1318" viewBox="0 0 2159 1318"><path d="M521.9 112.9L798.9 46.2" stroke="#5a4a4a" stroke-width="1" opacity=".7" fill="none"/><path d="M506.6 112.1L518.4 100.7q1.2-.9 2.1.1l.9 1.2q.5.9-.2 1.7l-2.2 2.2L798.4 45l.6.9L522 112.2l1.9 2.4q.7 1.1-.3 1.9l-1.5.6q-.8.3-1.7 0z" fill="#f80000"/><path d="M139.5 300.9L340.5 309.5" stroke="#5a4a4a" stroke-width="1" opacity=".6" fill="none"/><path d="M357.2 311L342.2 301.3q-1.200-.6-1.900.3l-.6 1.100q-.4 1 .5 1.700l2.300 1.900L139.600 299.700l-.1.9L341.600 313l-2.600 2.300q-.8.900-.1 1.800l.7.800q.8.700 1.900.2z" fill="#f80000"/></svg>
</body></html>
